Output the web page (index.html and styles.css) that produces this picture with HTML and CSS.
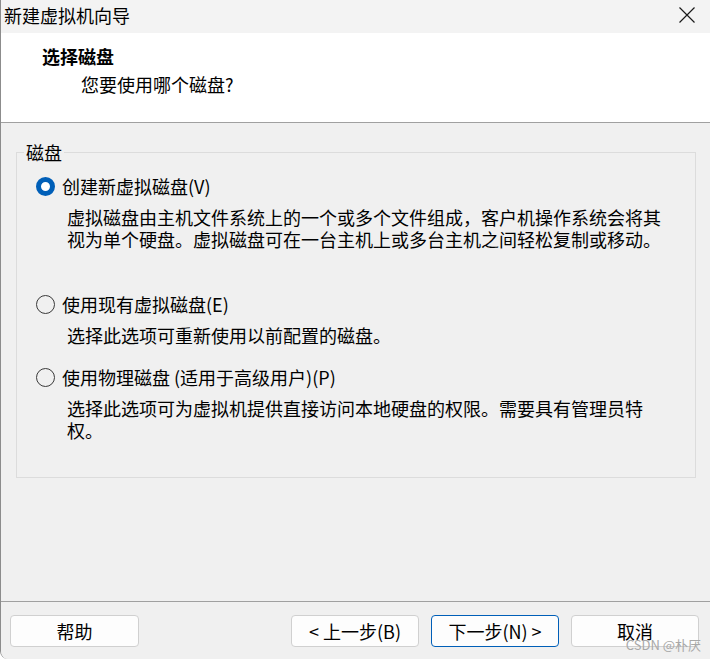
FILE: index.html
```html
<!DOCTYPE html>
<html lang="zh-CN">
<head>
<meta charset="utf-8">
<title>新建虚拟机向导</title>
<link rel="stylesheet" href="styles.css">
</head>
<body>
<div class="window">
  <div class="titlebar">
    <span class="title">新建虚拟机向导</span>
    <svg class="close" width="16" height="16" viewBox="0 0 16 16"><path d="M0.5 0.5 L15.5 15.5 M15.5 0.5 L0.5 15.5" stroke="#1a1a1a" stroke-width="1.2" fill="none"/></svg>
  </div>
  <div class="header">
    <div class="heading">选择磁盘</div>
    <div class="subheading">您要使用哪个磁盘?</div>
  </div>
  <div class="content">
    <fieldset class="group">
      <legend class="legend">磁盘</legend>
      <div class="option first">
        <span class="radio checked"></span>
        <span class="label">创建新虚拟磁盘(V)</span>
      </div>
      <div class="desc">虚拟磁盘由主机文件系统上的一个或多个文件组成，客户机操作系统会将其<br>视为单个硬盘。虚拟磁盘可在一台主机上或多台主机之间轻松复制或移动。</div>
      <div class="option second">
        <span class="radio"></span>
        <span class="label">使用现有虚拟磁盘(E)</span>
      </div>
      <div class="desc">选择此选项可重新使用以前配置的磁盘。</div>
      <div class="option third">
        <span class="radio"></span>
        <span class="label">使用物理磁盘 (适用于高级用户)(P)</span>
      </div>
      <div class="desc">选择此选项可为虚拟机提供直接访问本地硬盘的权限。需要具有管理员特<br>权。</div>
    </fieldset>
  </div>
  <div class="footer">
    <button class="btn">帮助</button>
    <div class="spacer"></div>
    <button class="btn">&lt; 上一步(B)</button>
    <button class="btn default">下一步(N) &gt;</button>
    <button class="btn">取消</button>
  </div>
  <div class="watermark">CSDN @朴厌</div>
</div>
</body>
</html>
```
FILE: styles.css
```css
html, body {
  margin: 0;
  padding: 0;
  background: #ffffff;
}
body {
  font-family: "Noto Sans CJK SC", "Noto Sans", sans-serif;
  font-size: 18px;
  color: #000;
}
.window {
  position: relative;
  width: 710px;
  height: 659px;
  box-sizing: border-box;
  border-left: 1px solid #8c8c8c;
  border-bottom-left-radius: 8px;
  display: flex;
  flex-direction: column;
  overflow: hidden;
  background: #f0f0f0;
}
.titlebar {
  height: 33px;
  flex: none;
  background: #f3f3f3;
  display: flex;
  align-items: center;
  justify-content: space-between;
  padding-left: 3px;
  padding-right: 15px;
}
.title {
  font-size: 18px;
  line-height: 24px;
  margin-top: -3px;
}
.close {
  margin-top: -3px;
}
.header {
  flex: none;
  background: #ffffff;
  border-bottom: 1px solid #a0a0a0;
  padding-top: 11px;
  box-sizing: content-box;
  height: 78px;
}
.heading {
  font-weight: bold;
  line-height: 24px;
  padding-left: 41px;
}
.subheading {
  line-height: 24px;
  margin-top: 4px;
  padding-left: 80px;
}
.content {
  flex: 1;
  min-height: 0;
  padding: 17px 14px 0 15px;
  background: #f0f0f0;
}
.group {
  margin: 0;
  padding: 0 0 36px 0;
  border: 1px solid #dcdcdc;
  min-inline-size: 0;
}
.legend {
  margin-left: 7px;
  padding: 0 2px;
  line-height: 24px;
}
.option {
  display: flex;
  align-items: center;
  gap: 7px;
  padding-left: 19px;
  line-height: 22px;
}
.option.first { margin-top: 11px; }
.option.second { margin-top: 43px; }
.option.third { margin-top: 20px; }
.radio {
  width: 19px;
  height: 19px;
  box-sizing: border-box;
  border-radius: 50%;
  border: 1px solid #3a3a3a;
  flex: none;
}
.radio.checked {
  border: 5px solid #005fb8;
  background: #ffffff;
}
.desc {
  margin-top: 9px;
  padding-left: 50px;
  line-height: 22px;
  white-space: nowrap;
}
.footer {
  height: 58px;
  box-sizing: border-box;
  flex: none;
  border-top: 1px solid #a0a0a0;
  background: #f0f0f0;
  display: flex;
  align-items: flex-start;
  gap: 12px;
  padding: 13px 11px 0 9px;
}
.spacer { flex: 1; }
.btn {
  width: 128px;
  height: 32px;
  box-sizing: border-box;
  border: 1px solid #d0d0d0;
  border-radius: 4px;
  background: #fdfdfd;
  font-family: "Noto Sans CJK SC", "Noto Sans", sans-serif;
  font-size: 18px;
  color: #000;
  padding: 0;
  line-height: 28px;
}
.btn:first-child { width: 129px; }
.btn.default {
  border-color: #005fb8;
}
.watermark {
  position: absolute;
  right: 9px;
  bottom: 5px;
  font-size: 13px;
  color: #a8a8a8;
  font-family: "Noto Sans CJK SC", "Noto Sans", sans-serif;
}
```
